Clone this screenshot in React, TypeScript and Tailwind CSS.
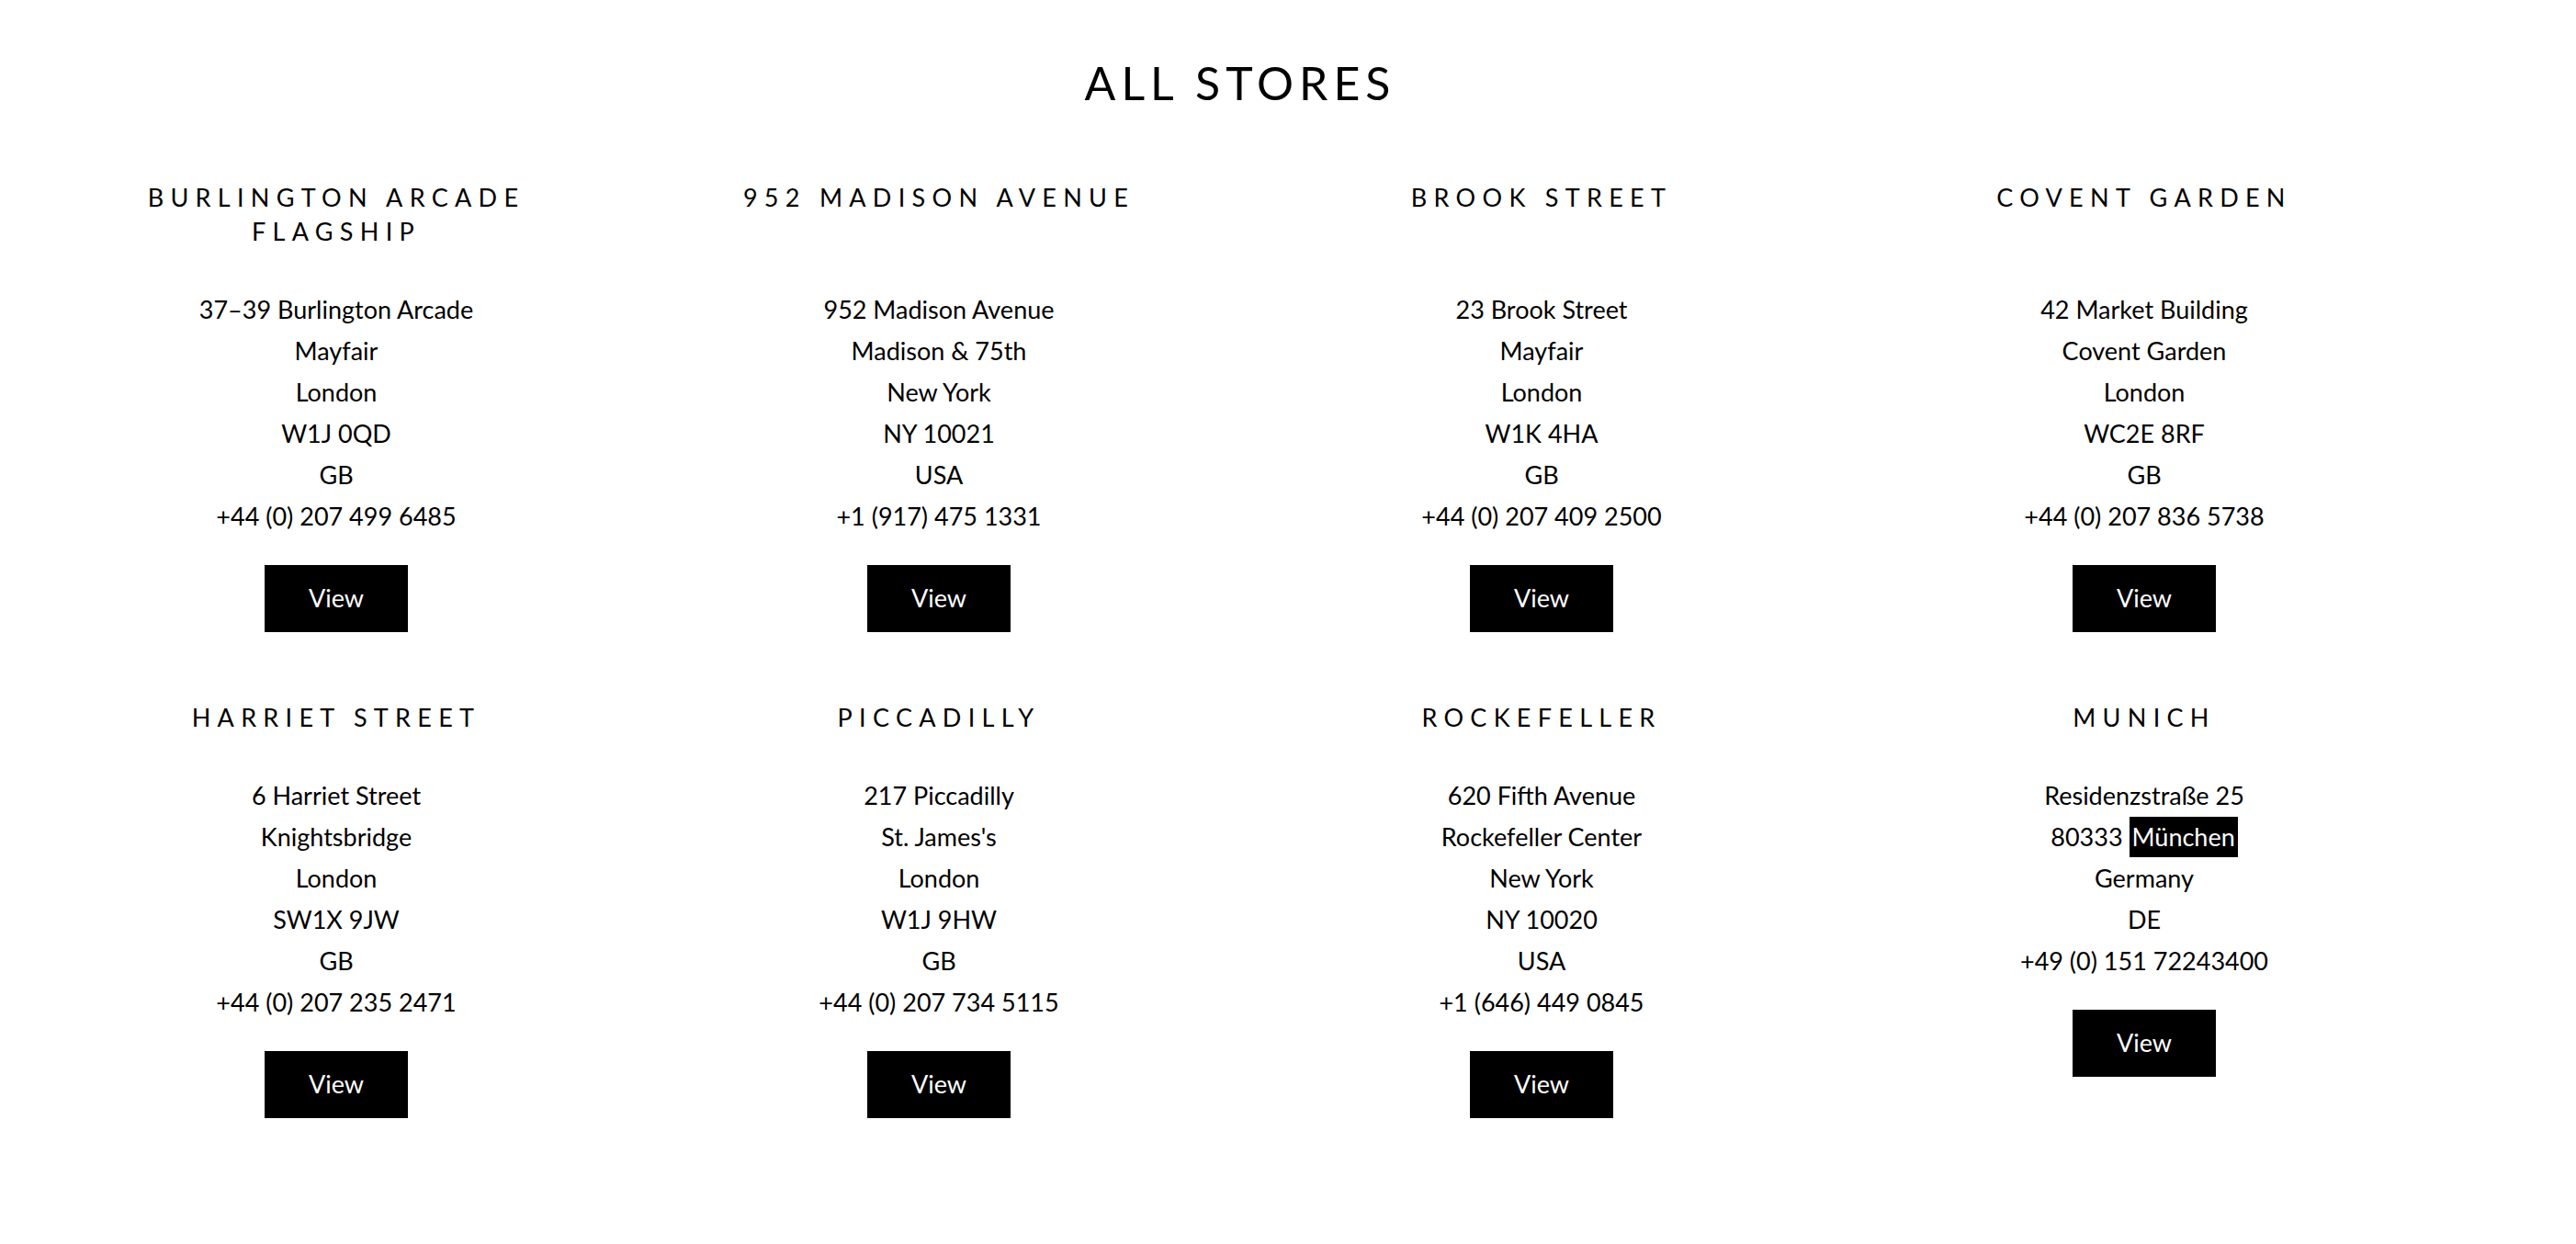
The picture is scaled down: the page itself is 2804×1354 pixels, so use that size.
import React from "react";

type Store = {
  name: string[];
  lines: React.ReactNode[];
};

const stores: Store[] = [
  {
    name: ["BURLINGTON ARCADE", "FLAGSHIP"],
    lines: ["37–39 Burlington Arcade", "Mayfair", "London", "W1J 0QD", "GB", "+44 (0) 207 499 6485"],
  },
  {
    name: ["952 MADISON AVENUE"],
    lines: ["952 Madison Avenue", "Madison & 75th", "New York", "NY 10021", "USA", "+1 (917) 475 1331"],
  },
  {
    name: ["BROOK STREET"],
    lines: ["23 Brook Street", "Mayfair", "London", "W1K 4HA", "GB", "+44 (0) 207 409 2500"],
  },
  {
    name: ["COVENT GARDEN"],
    lines: ["42 Market Building", "Covent Garden", "London", "WC2E 8RF", "GB", "+44 (0) 207 836 5738"],
  },
  {
    name: ["HARRIET STREET"],
    lines: ["6 Harriet Street", "Knightsbridge", "London", "SW1X 9JW", "GB", "+44 (0) 207 235 2471"],
  },
  {
    name: ["PICCADILLY"],
    lines: ["217 Piccadilly", "St. James's", "London", "W1J 9HW", "GB", "+44 (0) 207 734 5115"],
  },
  {
    name: ["ROCKEFELLER"],
    lines: ["620 Fifth Avenue", "Rockefeller Center", "New York", "NY 10020", "USA", "+1 (646) 449 0845"],
  },
  {
    name: ["MUNICH"],
    lines: [
      "Residenzstraße 25",
      <>
        80333{" "}
        <span className="inline-block bg-black px-[3px] leading-[44px] text-white">München</span>
      </>,
      "Germany",
      "DE",
      "+49 (0) 151 72243400",
    ],
  },
];

function StoreCard({ store }: { store: Store }) {
  return (
    <div className="row-span-2 grid grid-rows-subgrid gap-y-0">
      <h2 className="pb-[44px] text-center text-[27px] leading-[37px] tracking-[0.27em] font-normal text-black">
        {store.name.map((n) => (
          <div key={n}>{n}</div>
        ))}
      </h2>
      <div className="flex flex-col items-center pb-[74px]">
        {store.lines.map((l, i) => (
          <p key={i} className="h-[45px] text-[27px] leading-[45px] text-black">
            {l}
          </p>
        ))}
        <button
          type="button"
          className="mt-[31px] h-[73px] w-[156px] bg-black text-[27px] text-white"
        >
          View
        </button>
      </div>
    </div>
  );
}

export default function App() {
  return (
    <div
      className="min-h-screen w-full bg-white"
      style={{ fontFamily: "Lato, 'Open Sans', sans-serif" }}
    >
      <div className="ml-[38px] w-[2624px]">
        <h1 className="pt-[65px] pb-[81px] text-center text-[50px] leading-none tracking-[0.12em] text-black">
          ALL STORES
        </h1>
        <div className="grid grid-cols-4">
          {stores.map((s) => (
            <StoreCard key={s.name[0]} store={s} />
          ))}
        </div>
      </div>
    </div>
  );
}
